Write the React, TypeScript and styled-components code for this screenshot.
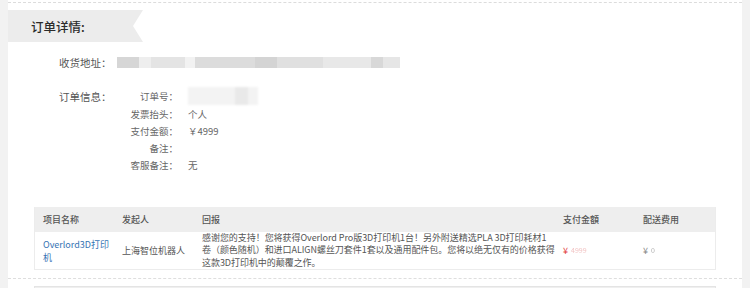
import styled, {createGlobalStyle} from "styled-components"

const Global = createGlobalStyle`
  html, body {
    margin: 0;
    padding: 0;
    background: #f2f2f2;
    font-family: "Noto Sans CJK SC", "Noto Sans", sans-serif;
  }
`
const Page = styled.div`
  padding: 0 8px;
  height: 288px;
  overflow: hidden;
`
const Panel = styled.div`
  background: #fff;
  height: 100%;
  padding-top: 2px;
`
const Section = styled.div`
  border-top: 1px dashed #dcdcdc;
  padding-top: 7px;
`
const Ribbon = styled.div`
  width: 112px;
  height: 32px;
  padding-left: 23px;
  background: #ececec;
  clip-path: polygon(0 0, 100% 0, calc(100% - 10px) 50%, 100% 100%, 0 100%);
  display: flex;
  align-items: center;
  font-size: 12.5px;
  color: #2b2b2b;
  font-weight: 500;
`
const Body = styled.div`
  padding-left: 51px;
  padding-top: 12px;
`
const Row = styled.div`
  display: flex;
  align-items: flex-start;
  margin-bottom: ${(p: {$gap?: number}) => p.$gap ?? 0}px;
`
const Label = styled.div`
  width: 58px;
  font-size: 10.5px;
  line-height: 17px;
  color: #555;
  white-space: nowrap;
`
const Blur = styled.div`
  display: flex;
  height: 11px;
  margin-top: 3px;
  filter: blur(0.6px);
`
const Chunk = styled.div<{$w: number; $c: string}>`
  width: ${(p) => p.$w}px;
  background: ${(p) => p.$c};
`
const InfoList = styled.div`
  display: flex;
  flex-direction: column;
`
const InfoRow = styled.div<{$h?: number}>`
  display: flex;
  align-items: center;
  height: ${(p) => p.$h ?? 17}px;
`
const SubLabel = styled.div`
  width: 61px;
  text-align: right;
  font-size: 9.5px;
  color: #666;
  white-space: nowrap;
`
const Value = styled.div`
  margin-left: 10px;
  font-size: 9.5px;
  color: #666;
  white-space: nowrap;
`
const OrderNoBlur = styled.div`
  margin-left: 10px;
  width: 70px;
  height: 18px;
  background: linear-gradient(90deg, #f3f3f3 0, #f3f3f3 67%, #e9e9e9 67%, #e9e9e9 86%, #f3f3f3 86%);
  filter: blur(0.8px);
`
const TableWrap = styled.div`
  margin: 34px 26px 0 26px;
`
const Table = styled.div`
  display: grid;
  grid-template-columns: 79px 80px 361px 80px 1fr;
  border: 1px solid #ececec;
  border-top: none;
  font-size: 9px;
`
const Th = styled.div`
  height: 25px;
  background: #eeeeee;
  display: flex;
  align-items: center;
  padding-left: 8px;
  color: #555;
  font-weight: 500;
`
const Td = styled.div<{$link?: boolean}>`
  height: 37px;
  display: flex;
  align-items: center;
  padding: 0 8px;
  line-height: 13px;
  color: ${(p) => (p.$link ? "#3673b3" : "#555")};
`
const NameCell = styled(Td)`
  padding-right: 0;
`
const Reward = styled(Td)`
  padding-right: 0;
  line-height: 12.6px;
  letter-spacing: -0.05px;
`
const Yen = styled.span<{$red?: boolean}>`
  color: ${(p) => (p.$red ? "#e23b3b" : "#888")};
`
const Smudge = styled.span<{$red?: boolean}>`
  display: inline-block;
  margin-left: 3px;
  color: ${(p) => (p.$red ? "#f2c4c4" : "#b0b0b0")};
  filter: blur(0.7px);
  font-size: 7px;
`
const Dashed = styled.div`
  margin-top: 8px;
  border-top: 1px dashed #dedede;
`
const NextBox = styled.div`
  margin: 7px 26px 0 26px;
  height: 20px;
  background: #efefef;
  border: 1px solid #e4e4e4;
`

export default function App() {
  return <Page>
    <Global/>
    <Panel>
      <Section>
        <Ribbon>订单详情:</Ribbon>
        <Body>
          <Row $gap={16}>
            <Label>收货地址：</Label>
            <Blur>
              <Chunk $w={22} $c="#d6d6d6"/>
              <Chunk $w={12} $c="#eeeeee"/>
              <Chunk $w={34} $c="#e4e4e4"/>
              <Chunk $w={10} $c="#f2f2f2"/>
              <Chunk $w={60} $c="#dcdcdc"/>
              <Chunk $w={22} $c="#d4d4d4"/>
              <Chunk $w={46} $c="#e0e0e0"/>
              <Chunk $w={48} $c="#e8e8e8"/>
              <Chunk $w={12} $c="#d8d8d8"/>
              <Chunk $w={17} $c="#e6e6e6"/>
            </Blur>
          </Row>
          <Row>
            <Label style={{marginTop: 1}}>订单信息：</Label>
            <InfoList>
              <InfoRow $h={18}>
                <SubLabel>订单号：</SubLabel>
                <OrderNoBlur/>
              </InfoRow>
              <InfoRow>
                <SubLabel>发票抬头：</SubLabel>
                <Value>个人</Value>
              </InfoRow>
              <InfoRow>
                <SubLabel>支付金额：</SubLabel>
                <Value>￥4999</Value>
              </InfoRow>
              <InfoRow>
                <SubLabel>备注：</SubLabel>
                <Value/>
              </InfoRow>
              <InfoRow>
                <SubLabel>客服备注：</SubLabel>
                <Value>无</Value>
              </InfoRow>
            </InfoList>
          </Row>
        </Body>
        <TableWrap>
          <Table>
            <Th>项目名称</Th>
            <Th>发起人</Th>
            <Th>回报</Th>
            <Th>支付金額</Th>
            <Th>配送费用</Th>
            <NameCell $link>Overlord3D打印机</NameCell>
            <Td>上海智位机器人</Td>
            <Reward>感谢您的支持！您将获得Overlord Pro版3D打印机1台！另外附送精选PLA 3D打印耗材1卷（颜色随机）和进口ALIGN螺丝刀套件1套以及通用配件包。您将以绝无仅有的价格获得这款3D打印机中的颠覆之作。</Reward>
            <Td><Yen $red>¥</Yen><Smudge $red>4999</Smudge></Td>
            <Td><Yen>¥</Yen><Smudge>0</Smudge></Td>
          </Table>
        </TableWrap>
        <Dashed/>
        <NextBox/>
      </Section>
    </Panel>
  </Page>
}
